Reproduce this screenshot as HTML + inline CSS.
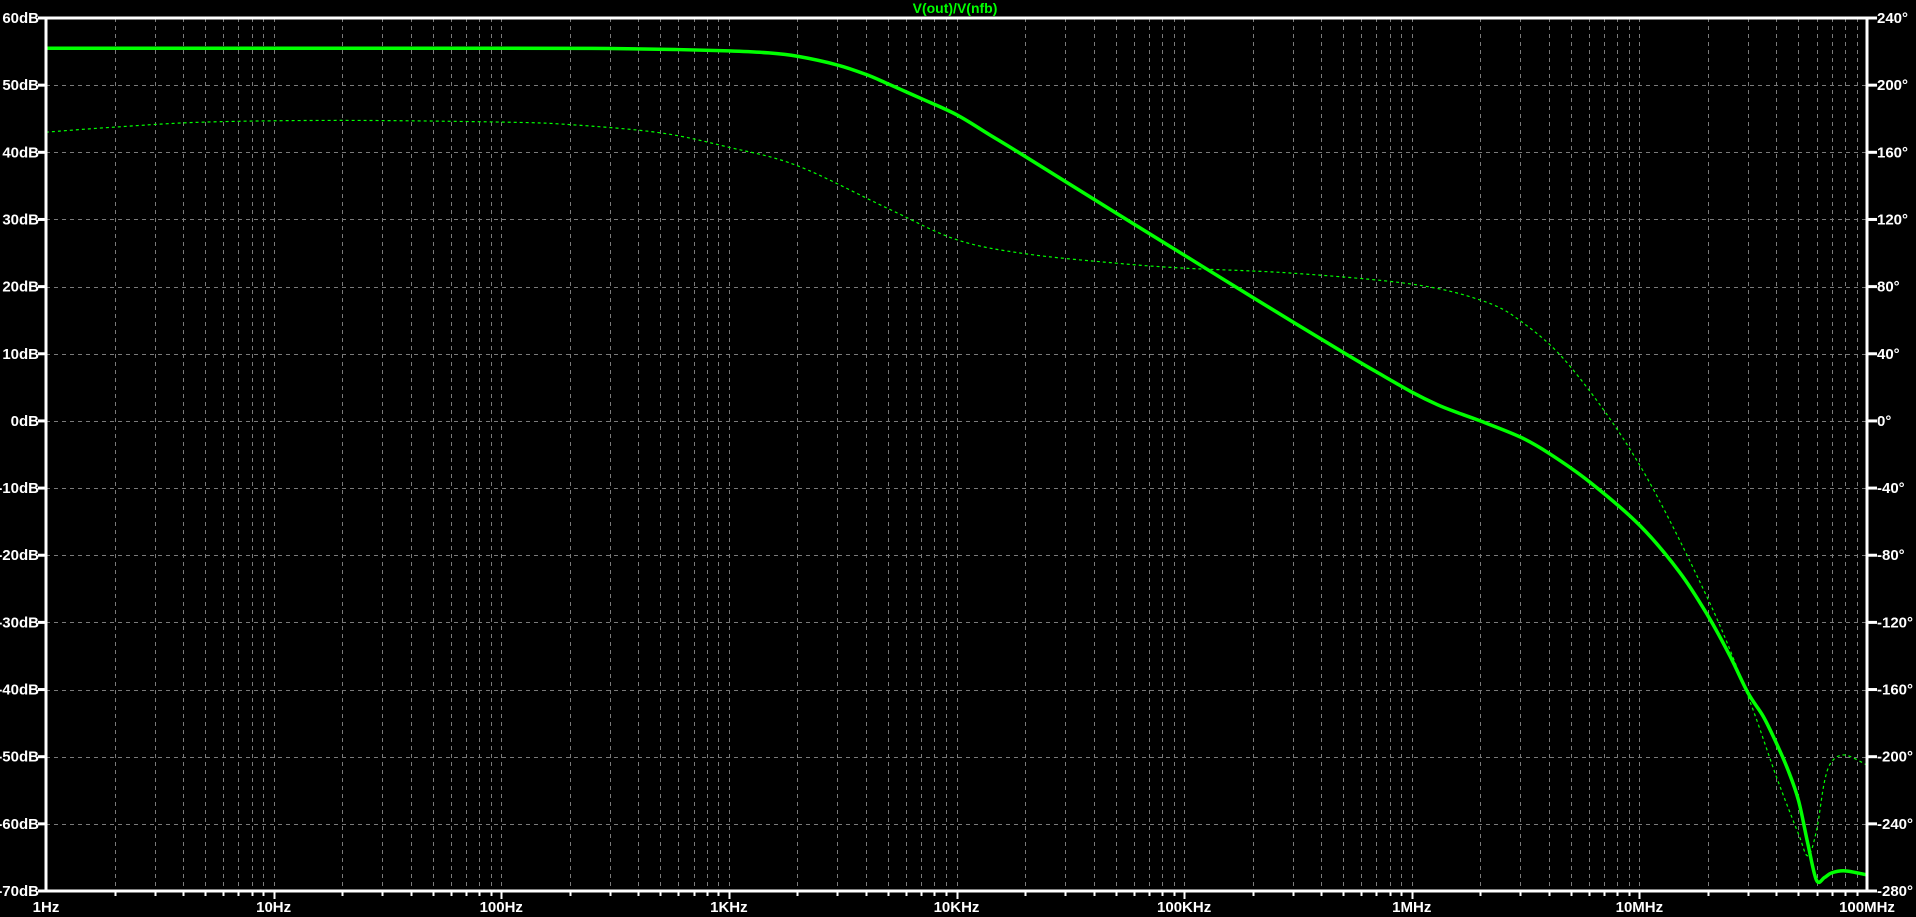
<!DOCTYPE html>
<html><head><meta charset="utf-8"><style>
html,body{margin:0;padding:0;background:#000;width:1916px;height:917px;overflow:hidden}
svg{display:block}
text{font-family:"Liberation Sans",sans-serif;font-weight:bold;font-size:15px;fill:#fff}
</style></head><body>
<svg id="s" width="1916" height="917" xmlns="http://www.w3.org/2000/svg">
<rect width="1916" height="917" fill="#000"/>
<g id="grid"></g>
<g id="curves"></g>
<g id="axes"></g>
<text x="955" y="13" text-anchor="middle" style="fill:#00ff00;font-size:14px">V(out)/V(nfb)</text>
</svg>
<script>
const NS="http://www.w3.org/2000/svg";
const L=46,R=1867,T=18,B=891,DEC=(R-L)/8,DY=(B-T)/13;
const X=f=>L+DEC*Math.log10(f);
const Y=d=>T+(60-d)/10*DY;
const P=p=>T+(240-p)/40*DY;
function el(n,a,p,t){const e=document.createElementNS(NS,n);for(const k in a)e.setAttribute(k,a[k]);if(t)e.textContent=t;document.getElementById(p).appendChild(e);return e;}
const gs={stroke:"#7a7a7a","stroke-width":1,"stroke-dasharray":"4,4"};
for(let i=1;i<13;i++){const y=Math.round(Y(60-i*10))+.5;el("line",Object.assign({x1:L,x2:R,y1:y,y2:y},gs),"grid");}
for(let d=0;d<8;d++)for(let m=1;m<10;m++){if(d==0&&m==1)continue;const x=Math.round(X(m*Math.pow(10,d)))+.5;el("line",Object.assign({x1:x,x2:x,y1:T,y2:B},gs),"grid");
 el("line",{x1:x,x2:x,y1:B,y2:B+(m==1?8:5),stroke:"#fff","stroke-width":2},"axes");}
el("rect",{x:L,y:T,width:R-L,height:B-T,fill:"none",stroke:"#fff","stroke-width":3},"axes");
for(let i=0;i<=13;i++){const d=60-i*10,y=Y(d);
 el("line",{x1:L-8,x2:L,y1:y,y2:y,stroke:"#fff","stroke-width":3},"axes");
 el("text",{x:L-7,y:y+5,"text-anchor":"end"},"axes",d+"dB");
 const p=240-i*40;
 el("line",{x1:R,x2:R+10,y1:y,y2:y,stroke:"#fff","stroke-width":3},"axes");
 el("text",{x:R+10,y:y+5},"axes",p+"°");}
const labs=["1Hz","10Hz","100Hz","1KHz","10KHz","100KHz","1MHz","10MHz","100MHz"];
labs.forEach((t,i)=>el("text",{x:L+i*DEC,y:912,"text-anchor":"middle"},"axes",t));
function path(pts){let d="M"+pts[0][0]+","+pts[0][1];
 for(let i=0;i<pts.length-1;i++){const p0=pts[i-1]||pts[i],p1=pts[i],p2=pts[i+1],p3=pts[i+2]||p2;
  d+=" C"+(p1[0]+(p2[0]-p0[0])/6)+","+(p1[1]+(p2[1]-p0[1])/6)+" "+(p2[0]-(p3[0]-p1[0])/6)+","+(p2[1]-(p3[1]-p1[1])/6)+" "+p2[0]+","+p2[1];}
 return d;}
const mag=[[1,55.5],[100,55.5],[300,55.45],[600,55.3],[1000,55.1],[1500,54.8],[2000,54.3],[3000,53],[4000,51.6],[5000,50.2],[7000,48],[10000,45.6],[14000,42.6],[20000,39.4],[50000,31],[100000,24.7],[200000,18.4],[500000,10.2],[700000,7.3],[1e6,4.3],[1.3e6,2.4],[1.6e6,1.2],[2e6,0],[3e6,-2.4],[4e6,-4.8],[6e6,-9],[1e7,-15.5],[1.5e7,-22.5],[2e7,-29],[2.5e7,-35],[3e7,-40.5],[3.5e7,-44],[4e7,-48],[4.5e7,-52],[5e7,-56.5],[5.5e7,-63],[6e7,-68.4],[6.5e7,-68],[7e7,-67.3],[8e7,-67],[1e8,-67.6]];
const ph=[[1,172],[2,175],[5,178],[20,179],[100,178],[200,176.5],[500,171.6],[1000,163],[2000,152],[5000,126.5],[10000,108],[20000,99.6],[50000,94],[100000,91],[300000,88],[1e6,81.5],[2e6,72],[3e6,59.6],[5e6,32],[1e7,-26],[2e7,-106],[3e7,-164],[4e7,-212],[5e7,-246],[5.5e7,-259],[6e7,-244],[6.5e7,-215],[7e7,-203],[8e7,-199],[1e8,-205]];
el("path",{d:path(ph.map(p=>[X(p[0]),P(p[1])])),fill:"none",stroke:"#00ff00","stroke-width":1.2,"stroke-dasharray":"3,3"},"curves");
el("path",{d:path(mag.map(p=>[X(p[0]),Y(p[1])])),fill:"none",stroke:"#00ff00","stroke-width":3.5},"curves");
</script>
</body></html>
